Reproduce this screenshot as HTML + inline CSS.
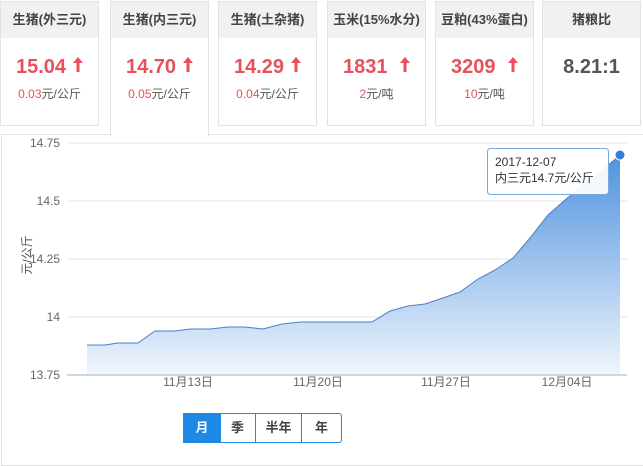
<!DOCTYPE html><html><head><meta charset="utf-8"><style>
body{margin:0;width:643px;height:451px;background:#fff;font-family:"Liberation Sans","Noto Sans CJK SC",sans-serif;position:relative;overflow:hidden}
.c{position:absolute;top:1px;width:97px;height:123px;border:1px solid #e2e2e2;background:#fff;text-align:center}
.c .h{background:#f1f1f1;height:36px;line-height:36px;font-size:13px;color:#444;font-weight:bold}
.c .v{margin-top:18px;font-size:20px;font-weight:bold;color:#e8505b}
.c .s{margin-top:6px;font-size:12px;color:#555}
.c .s b{font-weight:normal;color:#e8505b}
.ar{display:inline-block;margin-left:7px;vertical-align:1px}
.a{z-index:2;height:134px;border-bottom:none}
.panel{position:absolute;left:1px;top:134px;width:660px;height:330px;border:1px solid #e2e2e2}
.btn{position:absolute;top:413px;height:28px;line-height:28px;text-align:center;font-size:13px;border:1px solid #1e88e5;border-left:none;color:#444;font-weight:bold}
</style></head><body>
<div class="c" style="left:0"><div class="h">生猪(外三元)</div><div class="v">15.04<svg class="ar" width="10" height="15" viewBox="0 0 10 15"><path d="M5,0 L10,6 L6.5,6 L6.5,15 L3.5,15 L3.5,6 L0,6Z" fill="#e8505b"/></svg></div><div class="s"><b>0.03</b>元/公斤</div></div>
<div class="c a" style="left:110px"><div class="h">生猪(内三元)</div><div class="v">14.70<svg class="ar" width="10" height="15" viewBox="0 0 10 15"><path d="M5,0 L10,6 L6.5,6 L6.5,15 L3.5,15 L3.5,6 L0,6Z" fill="#e8505b"/></svg></div><div class="s"><b>0.05</b>元/公斤</div></div>
<div class="c" style="left:218px"><div class="h">生猪(土杂猪)</div><div class="v">14.29<svg class="ar" width="10" height="15" viewBox="0 0 10 15"><path d="M5,0 L10,6 L6.5,6 L6.5,15 L3.5,15 L3.5,6 L0,6Z" fill="#e8505b"/></svg></div><div class="s"><b>0.04</b>元/公斤</div></div>
<div class="c" style="left:327px"><div class="h">玉米(15%水分)</div><div class="v">1831 <svg class="ar" width="10" height="15" viewBox="0 0 10 15"><path d="M5,0 L10,6 L6.5,6 L6.5,15 L3.5,15 L3.5,6 L0,6Z" fill="#e8505b"/></svg></div><div class="s"><b>2</b>元/吨</div></div>
<div class="c" style="left:435px"><div class="h">豆粕(43%蛋白)</div><div class="v">3209 <svg class="ar" width="10" height="15" viewBox="0 0 10 15"><path d="M5,0 L10,6 L6.5,6 L6.5,15 L3.5,15 L3.5,6 L0,6Z" fill="#e8505b"/></svg></div><div class="s"><b>10</b>元/吨</div></div>
<div class="c" style="left:542px"><div class="h">猪粮比</div><div class="v" style="color:#555">8.21:1</div></div>
<div class="panel"></div>
<svg style="position:absolute;left:0;top:0" width="643" height="451">
<defs><linearGradient id="g" x1="0" y1="0" x2="0" y2="1"><stop offset="0" stop-color="#2f7fd8"/><stop offset="1" stop-color="#eef4fc"/></linearGradient></defs>
<g stroke="#e6e6e6"><line x1="67" y1="143" x2="627" y2="143"/><line x1="67" y1="201" x2="627" y2="201"/><line x1="67" y1="259" x2="627" y2="259"/><line x1="67" y1="317" x2="627" y2="317"/></g>
<path d="M87,345 L105,345 L118,343 L138,343 L155,331 L175,331 L190,329 L210,329 L228,327 L245,327 L263,329 L282,324 L300,322 L320,322 L337,322 L355,322 L372,322 L390,311 L408,306 L425,304 L443,298 L460,292 L478,279 L495,270 L513,258 L530,238 L548,215 L565,200 L583,185 L600,172 L620,155 L620,375 L87,375Z" fill="url(#g)" opacity="0.85"/>
<path d="M87,345 L105,345 L118,343 L138,343 L155,331 L175,331 L190,329 L210,329 L228,327 L245,327 L263,329 L282,324 L300,322 L320,322 L337,322 L355,322 L372,322 L390,311 L408,306 L425,304 L443,298 L460,292 L478,279 L495,270 L513,258 L530,238 L548,215 L565,200 L583,185 L600,172 L620,155" fill="none" stroke="#4a7fc8" stroke-width="1"/>
<line x1="67" y1="375" x2="627" y2="375" stroke="#ccd6eb" stroke-width="2"/>
<circle cx="620" cy="155" r="5" fill="#2f7fd8" stroke="#fff"/>
<g font-size="12" fill="#666" text-anchor="end"><text x="60" y="147">14.75</text><text x="60" y="205">14.5</text><text x="60" y="263">14.25</text><text x="60" y="321">14</text><text x="60" y="379">13.75</text></g>
<g font-size="12" fill="#666" text-anchor="middle"><text x="188" y="386">11月13日</text><text x="318" y="386">11月20日</text><text x="446" y="386">11月27日</text><text x="567" y="386">12月04日</text></g>
<text x="0" y="0" font-size="12" fill="#555" transform="translate(31,255) rotate(-90)" text-anchor="middle">元/公斤</text>
<rect x="487.5" y="148.5" width="121" height="46" rx="3" fill="#fff" fill-opacity="0.92" stroke="#7aa7e0"/>
<text x="495" y="166" font-size="12" fill="#333">2017-12-07</text>
<text x="495" y="182" font-size="12" fill="#333">内三元14.7元/公斤</text>
</svg>
<div class="btn" style="left:183px;width:36px;border-left:1px solid #1e88e5;background:#1e88e5;color:#fff">月</div>
<div class="btn" style="left:220px;width:35px">季</div>
<div class="btn" style="left:256px;width:45px">半年</div>
<div class="btn" style="left:302px;width:39px;border-radius:0 3px 3px 0">年</div>
</body></html>
